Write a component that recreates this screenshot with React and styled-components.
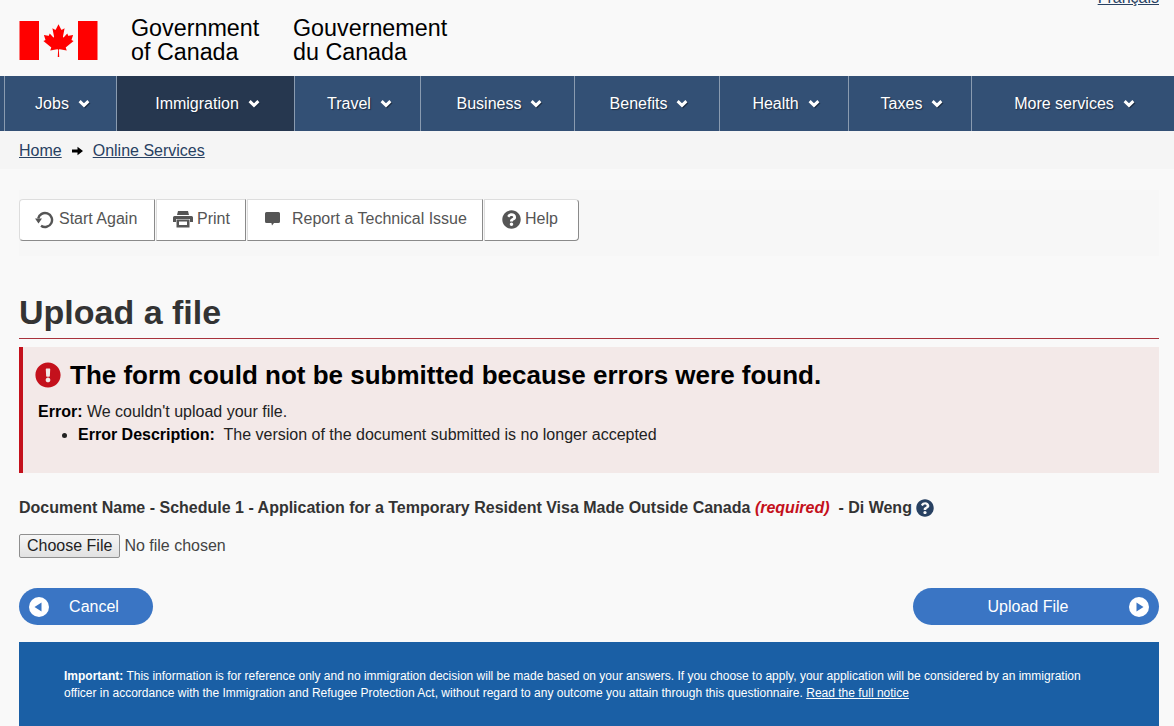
import React from "react";
import styled, { createGlobalStyle } from "styled-components";
import { FaQuestionCircle, FaExclamationCircle } from "react-icons/fa";

const GlobalStyle = createGlobalStyle`
  html, body {
    margin: 0;
    padding: 0;
    background: #f9f9f9;
    font-family: "Liberation Sans", Arial, sans-serif;
    font-size: 16px;
    color: #333;
    overflow: hidden;
  }
`;

const Page = styled.div`
  width: 1174px;
  height: 726px;
  overflow: hidden;
`;

const Header = styled.header`
  height: 76px;
  box-sizing: border-box;
  display: flex;
  justify-content: space-between;
  align-items: flex-start;
  padding: 0 15px 0 19px;
`;

const Brand = styled.div`
  display: flex;
  padding-top: 16px;
`;

const Flag = styled.svg`
  width: 79px;
  height: 39px;
  margin-top: 5px;
  margin-right: 33px;
`;

const BrandName = styled.div`
  font-size: 23.3px;
  line-height: 24px;
  color: #000;
  width: ${(p) => p.$width}px;
`;

const LangLink = styled.a`
  margin-top: -11px;
  font-size: 16px;
  line-height: 18px;
  color: #284162;
  text-decoration: underline;
`;

const Nav = styled.nav`
  height: 55px;
  background: #335075;
  padding-left: 4px;
  display: grid;
  grid-template-columns: 112px 178px 126px 154px 145px 129px 123px 202px;
`;

const NavItem = styled.div`
  display: flex;
  align-items: center;
  justify-content: center;
  gap: 9px;
  padding-left: 4px;
  border-left: 1px solid #8a9bb0;
  background: ${(p) => (p.$active ? "#26374f" : "transparent")};
  color: #fff;
  font-size: 16px;
  text-shadow: 1px 1px 1px #1c2c42;
  svg {
    filter: drop-shadow(1px 1px 0 #1c2c42);
  }
`;

const Breadcrumbs = styled.div`
  height: 38px;
  box-sizing: border-box;
  background: #f5f5f5;
  padding: 2px 19px 0;
  display: flex;
  align-items: center;
  gap: 10px;
  a {
    color: #284162;
    text-decoration: underline;
  }
`;

const Toolbar = styled.div`
  margin-top: 21px;
  margin-left: 19px;
  height: 66px;
  box-sizing: border-box;
  background: #f7f7f7;
  padding-top: 9px;
  margin-right: 15px;
  display: flex;
  gap: 1px;
`;

const ToolButton = styled.button`
  width: ${(p) => p.$width}px;
  height: 42px;
  box-sizing: border-box;
  background: #fff;
  border: 1px solid #ddd;
  border-right-color: #8a8a8a;
  border-bottom-color: #8a8a8a;
  border-radius: ${(p) => p.$radius || "0"};
  padding: 0 0 2px ${(p) => p.$pad}px;
  display: flex;
  align-items: center;
  gap: ${(p) => p.$gap}px;
  color: #555;
  font: 16px "Liberation Sans", Arial, sans-serif;
`;

const Main = styled.main`
  padding: 0 15px 0 19px;
`;

const Title = styled.h1`
  margin: 35px 0 0;
  padding-bottom: 5px;
  font-size: 34px;
  line-height: 42px;
  font-weight: 700;
  color: #333;
  border-bottom: 1px solid #a8323c;
`;

const ErrorBox = styled.section`
  margin-top: 8px;
  height: 126px;
  box-sizing: border-box;
  background: #f3e9e8;
  border-left: 4px solid #c4111c;
  padding: 13px 0 0 12px;
  color: #000;
`;

const ErrorHead = styled.h2`
  margin: 0;
  display: flex;
  align-items: center;
  gap: 9px;
  font-size: 26px;
  line-height: 30px;
  font-weight: 700;
  color: #000;
`;

const ErrorIcon = styled(FaExclamationCircle)`
  color: #c4111c;
  font-size: 26px;
  flex: none;
`;

const ErrorLine = styled.p`
  margin: 10px 0 0 3px;
  line-height: 23px;
  color: #222;
  b {
    color: #000;
  }
`;

const ErrorList = styled.ul`
  margin: 0;
  padding-left: 43px;
  line-height: 23px;
  color: #222;
  b {
    color: #000;
  }
`;

const DocLabel = styled.div`
  margin-top: 24px;
  display: flex;
  align-items: center;
  height: 22px;
  font-weight: 700;
  white-space: pre;
  color: #333;
  em {
    color: #c4111c;
  }
`;

const HelpIcon = styled(FaQuestionCircle)`
  color: #284162;
  font-size: 18px;
  margin-left: 4px;
`;

const FileInput = styled.input`
  display: block;
  margin-top: 15px;
  font: 16px "Liberation Sans", Arial, sans-serif;
  color: #444;
  &::file-selector-button {
    height: 24px;
    padding: 0 7px;
    font: 16px "Liberation Sans", Arial, sans-serif;
    color: #222;
    background: linear-gradient(#f6f6f6, #e2e2e2);
    border: 1px solid #8f8f8f;
    border-radius: 2px;
  }
`;

const Actions = styled.div`
  margin-top: 30px;
  display: flex;
  justify-content: space-between;
`;

const PillButton = styled.button`
  width: ${(p) => p.$width}px;
  height: 37px;
  box-sizing: border-box;
  border: none;
  border-radius: 19px;
  background: #3a75c4;
  color: #fff;
  font: 16px "Liberation Sans", Arial, sans-serif;
  display: flex;
  align-items: center;
  padding: 0 10px;
  span {
    flex: 1;
    text-align: center;
    padding: ${(p) => p.$textPad};
  }
`;

const Disc = styled.svg`
  width: 20px;
  height: 20px;
  flex: none;
`;

const Notice = styled.footer`
  margin-top: 17px;
  height: 84px;
  box-sizing: border-box;
  background: #1a5fa5;
  color: #fff;
  padding: 26px 60px 0 45px;
  font-size: 12px;
  line-height: 17px;
  a {
    color: #fff;
    text-decoration: underline;
  }
`;

function Chevron() {
  return (
    <svg width="12" height="10" viewBox="0 0 12 10">
      <path d="M1.6 2.2 6 6.4l4.4-4.2" fill="none" stroke="#fff" strokeWidth="3" />
    </svg>
  );
}

function CrumbArrow() {
  return (
    <svg width="11" height="10" viewBox="0 0 11 10">
      <path d="M0 3.500h5.500V.8L11 5 5.500 9.200V6.500H0z" fill="#000" />
    </svg>
  );
}

function RepeatIcon() {
  return (
    <svg width="19" height="19" viewBox="0 0 19 19">
      <path d="M6 15.700A7 7 0 1 0 3.200 8.500" fill="none" stroke="#555" strokeWidth="2.400" />
      <path d="M0 8.500h7L3.500 13.500z" fill="#555" />
    </svg>
  );
}

function PrintIcon() {
  return (
    <svg width="20" height="18" viewBox="0 0 20 18">
      <path d="M5 1h10l1 4H4z" fill="#555" />
      <path d="M1.500 6h17A1.500 1.500 0 0 1 20 7.500V12h-3V9H3v3H0V7.500A1.500 1.500 0 0 1 1.500 6z" fill="#555" />
      <path d="M3.500 9.500h13V17.500h-13zM6 11.500v3.500h8v-3.500z" fill="#555" fillRule="evenodd" />
    </svg>
  );
}

function CommentIcon() {
  return (
    <svg width="17" height="16" viewBox="0 0 17 16">
      <path d="M2.500 1h12A1.500 1.500 0 0 1 16 2.500v8a1.500 1.500 0 0 1-1.500 1.500H10l-2 2.500-.6-2.500H2.500A1.500 1.500 0 0 1 1 10.500v-8A1.500 1.500 0 0 1 2.500 1z" fill="#555" />
    </svg>
  );
}

const navItems = ["Jobs", "Immigration", "Travel", "Business", "Benefits", "Health", "Taxes", "More services"];

export default function App() {
  return (
    <Page>
      <GlobalStyle />
      <Header>
        <Brand>
          <Flag viewBox="0 0 9600 4800">
            <path fill="#f00" d="M0 0h2400v4800H0zM7200 0h2400v4800H7200z" />
            <path
              fill="#f00"
              d="m4890 4430-45-863a95 95 0 0 1 111-98l859 151-116-320a65 65 0 0 1 20-73l941-762-212-99a65 65 0 0 1-34-79l186-572-542 115a65 65 0 0 1-73-38l-105-247-423 454a65 65 0 0 1-111-57l204-1052-327 189a65 65 0 0 1-91-27l-332-652-332 652a65 65 0 0 1-91 27l-327-189 204 1052a65 65 0 0 1-111 57l-423-454-105 247a65 65 0 0 1-73 38l-542-115 186 572a65 65 0 0 1-34 79l-212 99 941 762a65 65 0 0 1 20 73l-116 320 859-151a95 95 0 0 1 111 98l-45 863z"
            />
          </Flag>
          <BrandName $width={162}>Government<br />of Canada</BrandName>
          <BrandName $width={170}>Gouvernement<br />du Canada</BrandName>
        </Brand>
        <LangLink href="#">Français</LangLink>
      </Header>
      <Nav>
        {navItems.map((item) => (
          <NavItem key={item} $active={item === "Immigration"}>
            {item}
            <Chevron />
          </NavItem>
        ))}
      </Nav>
      <Breadcrumbs>
        <a href="#">Home</a>
        <CrumbArrow />
        <a href="#">Online Services</a>
      </Breadcrumbs>
      <Toolbar>
        <ToolButton $width={136} $pad={15} $gap={5} $radius="4px 0 0 4px">
          <RepeatIcon />
          Start Again
        </ToolButton>
        <ToolButton $width={90} $pad={16} $gap={4}>
          <PrintIcon />
          Print
        </ToolButton>
        <ToolButton $width={236} $pad={16} $gap={11}>
          <CommentIcon />
          Report a Technical Issue
        </ToolButton>
        <ToolButton $width={95} $pad={17} $gap={4} $radius="0 4px 4px 0">
          <FaQuestionCircle size={19} />
          Help
        </ToolButton>
      </Toolbar>
      <Main>
        <Title>Upload a file</Title>
        <ErrorBox>
          <ErrorHead>
            <ErrorIcon />
            The form could not be submitted because errors were found.
          </ErrorHead>
          <ErrorLine>
            <b>Error:</b> We couldn't upload your file.
          </ErrorLine>
          <ErrorList>
            <li>
              <b>Error Description:</b>&nbsp; The version of the document submitted is no longer accepted
            </li>
          </ErrorList>
        </ErrorBox>
        <DocLabel>
          Document Name - Schedule 1 - Application for a Temporary Resident Visa Made Outside Canada <em>(required)</em>  - Di Weng
          <HelpIcon />
        </DocLabel>
        <FileInput type="file" />
        <Actions>
          <PillButton $width={134} $textPad="1px 4px 0 0">
            <Disc viewBox="0 0 20 20">
              <circle cx="10" cy="10" r="10" fill="#fff" />
              <path d="M5.500 10 12.500 5.500v9z" fill="#3a75c4" />
            </Disc>
            <span>Cancel</span>
          </PillButton>
          <PillButton $width={246} $textPad="1px 0 0 4px">
            <span>Upload File</span>
            <Disc viewBox="0 0 20 20">
              <circle cx="10" cy="10" r="10" fill="#fff" />
              <path d="M14.500 10 7.500 5.500v9z" fill="#3a75c4" />
            </Disc>
          </PillButton>
        </Actions>
        <Notice>
          <b>Important:</b> This information is for reference only and no immigration decision will be made based on your answers. If you choose to apply, your application will be considered by an immigration officer in accordance with the Immigration and Refugee Protection Act, without regard to any outcome you attain through this questionnaire. <a href="#">Read the full notice</a>
        </Notice>
      </Main>
    </Page>
  );
}
